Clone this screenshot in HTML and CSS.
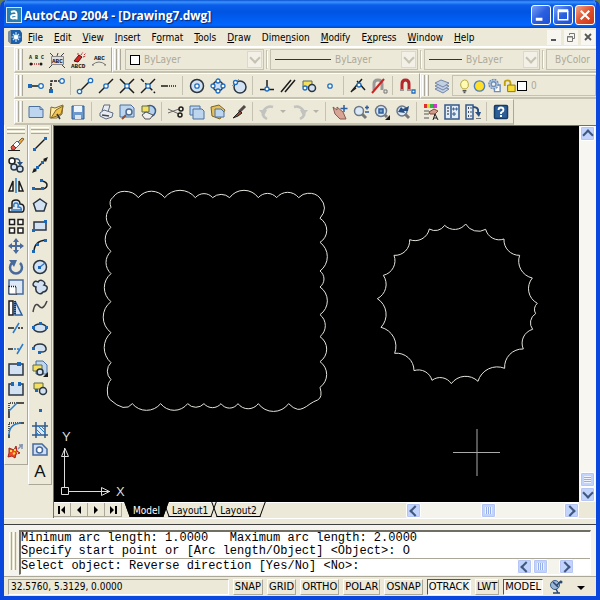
FILE: index.html
```
<!DOCTYPE html>
<html lang="en">
<head>
    <meta charset="UTF-8">
    <meta name="viewport" content="width=device-width, initial-scale=1.0">
    <title>AutoCAD 2004 - [Drawing7.dwg]</title>
    <link rel="stylesheet" href="styles.css">
</head>
<body>
<div class="window">

    <!-- Title bar -->
    <header class="titlebar">
        <svg class="app-icon" viewBox="0 0 16 16"><rect x=".5" y=".5" width="15" height="15" fill="#2b7fae" stroke="#d5e6f2"/><path d="M5 5Q10.500 3 10.500 7V12.500M10.500 8Q5 7.500 5 10T10.500 10.500" fill="none" stroke="#fff" stroke-width="2"/></svg>
        <h1>AutoCAD 2004 - [Drawing7.dwg]</h1>
        <button class="caption" aria-label="Minimize"><svg viewBox="0 0 19 19"><path d="M4 14h7" stroke="#fff" stroke-width="3"/></svg></button>
        <button class="caption" aria-label="Maximize"><svg viewBox="0 0 19 19"><path d="M4.500 5v9.500h10V5" stroke="#fff" stroke-width="1.500" fill="none"/><path d="M4 5h11" stroke="#fff" stroke-width="3"/></svg></button>
        <button class="caption close" aria-label="Close"><svg viewBox="0 0 19 19"><path d="M5 5l9 9M14 5l-9 9" stroke="#fff" stroke-width="2.200"/></svg></button>
    </header>

    <!-- Menu bar -->
    <nav class="menubar">
        <svg class="doc-icon" viewBox="0 0 16 16"><path d="M1 3l3-2h9l2 3v8l-3 3H4l-3-3z" fill="#1d5fa8"/><path d="M1 3l3-2v14l-3-3z" fill="#7d8da0"/><path d="M9 3v10M4.500 8h9M6 5l6 6M12 5l-6 6" stroke="#bfe0ff" stroke-width="1.200"/><circle cx="9" cy="8" r="2" fill="#fff"/></svg>
        <button><u>F</u>ile</button>
        <button><u>E</u>dit</button>
        <button><u>V</u>iew</button>
        <button><u>I</u>nsert</button>
        <button>F<u>o</u>rmat</button>
        <button><u>T</u>ools</button>
        <button><u>D</u>raw</button>
        <button>Dime<u>n</u>sion</button>
        <button><u>M</u>odify</button>
        <button>E<u>x</u>press</button>
        <button><u>W</u>indow</button>
        <button><u>H</u>elp</button>
        <span class="mdi">
            <button aria-label="Minimize drawing"><svg viewBox="0 0 14 14"><path d="M4 10h5" stroke="#555" stroke-width="2"/></svg></button>
            <button aria-label="Restore drawing"><svg viewBox="0 0 14 14"><path d="M3.500 6.500h5v5h-5zM3 7h6M5.500 5V3.500h5v5H9" stroke="#777" fill="none"/></svg></button>
            <button aria-label="Close drawing"><svg viewBox="0 0 14 14"><path d="M4 4l6 6M10 4l-6 6" stroke="#555" stroke-width="1.800"/></svg></button>
        </span>
    </nav>

    <!-- Toolbars -->
    <div class="toolbars">
        <div class="row">
            <div class="toolbar">
                <span class="grip"></span>
                <button class="tool" aria-label="Text fit"><svg class="icon" viewBox="0 0 18 18"><text class="tiny" x="2" y="8">A B C</text><path d="M5 13h9" stroke-dasharray="1 1" stroke="#a33"/><circle class="ink" cx="4" cy="13" r="1.500"/><circle class="ink" cx="14" cy="13" r="1.500"/></svg></button>
                <button class="tool" aria-label="Text mask"><svg class="icon" viewBox="0 0 18 18"><path d="M3.500 5.500h12v8h-12z" stroke="#888" stroke-width="1" fill="#ddd"/><path d="M2 2l3 3M16 2l-3 3M1 17l3-3M17 17l-3-3M9 5l1-3" stroke="#444" stroke-width="1"/><text x="4" y="12">ABC</text></svg></button>
                <button class="tool" aria-label="Explode text"><svg class="icon" viewBox="0 0 18 18"><path d="M5 10l5-6 3 2-4 5z" fill="#d22" stroke="#511" stroke-width="1"/><path d="M12 4l2-3M14 6l3-1M15 4l2-2M9 4V1" stroke="#b33" stroke-width="1" stroke-dasharray="2 1"/><text x="2" y="17">ABCD</text></svg></button>
                <button class="tool" aria-label="Arc aligned text"><svg class="icon" viewBox="0 0 18 18"><text x="4" y="9">ABC</text><path d="M2 14Q9 8 16 14M2 14h2M16 14h-2" stroke="#777" stroke-width="1"/></svg></button>
            </div>
            <div class="toolbar grow">
                <span class="grip"></span>
                <label class="combo color"><span class="swatch"></span><select aria-label="Color"><option>ByLayer</option></select><span class="drop"></span></label>
                <span class="thin"></span>
                <label class="combo linetype"><span class="rule"></span><select aria-label="Linetype"><option>ByLayer</option></select><span class="drop"></span></label>
                <span class="thin"></span>
                <label class="combo weight"><span class="rule"></span><select aria-label="Lineweight"><option>ByLayer</option></select><span class="drop"></span></label>
                <span class="thin"></span>
                <label class="combo plot"><select aria-label="Plot style"><option>ByColor</option></select></label>
            </div>
        </div>

        <div class="row">
            <div class="toolbar">
                <span class="grip"></span>
                <button class="tool" aria-label="Temporary track point"><svg class="icon" viewBox="0 0 18 18"><path d="M3 9h9"/><path class="dot" d="M1 7h4v4H1z"/><circle class="node" cx="14" cy="9" r="2.300"/></svg></button>
                <button class="tool" aria-label="Snap from"><svg class="icon" viewBox="0 0 18 18"><path d="M3 13V4h10" stroke-dasharray="3 1"/><path class="dot" d="M1 12h4v4H1z"/><circle class="node" cx="14" cy="4" r="2.300"/></svg></button>
                <span class="sep"></span>
                <button class="tool" aria-label="Endpoint"><svg class="icon" viewBox="0 0 18 18"><path d="M3 15L15 3"/><circle class="node" cx="3.500" cy="14.500" r="2.200"/><circle class="node" cx="14.500" cy="3.500" r="2.200"/></svg></button>
                <button class="tool" aria-label="Midpoint"><svg class="icon" viewBox="0 0 18 18"><path d="M2 16L16 2"/><circle class="node" cx="9" cy="9" r="2.200"/></svg></button>
                <button class="tool" aria-label="Intersection"><svg class="icon" viewBox="0 0 18 18"><path d="M2 16L16 2M2 2l14 14"/><circle class="node" cx="9" cy="9" r="2.200"/></svg></button>
                <button class="tool" aria-label="Apparent intersection"><svg class="icon" viewBox="0 0 18 18"><path d="M2 16L16 2"/><path d="M2 2l14 14" stroke-dasharray="4 2"/><circle class="node" cx="9" cy="9" r="2.200"/></svg></button>
                <button class="tool" aria-label="Extension"><svg class="icon" viewBox="0 0 18 18"><path d="M1 9h7"/><path d="M9 9h8" stroke-dasharray="1 1"/></svg></button>
                <span class="sep"></span>
                <button class="tool" aria-label="Center"><svg class="icon" viewBox="0 0 18 18"><circle class="pale" cx="9" cy="9" r="6.500"/><circle class="node" cx="9" cy="9" r="2.200"/></svg></button>
                <button class="tool" aria-label="Quadrant"><svg class="icon" viewBox="0 0 18 18"><circle class="pale" cx="9" cy="9" r="5"/><circle class="node" cx="9" cy="4" r="2"/><circle class="node" cx="9" cy="14" r="2"/><circle class="node" cx="4" cy="9" r="2"/><circle class="node" cx="14" cy="9" r="2"/></svg></button>
                <button class="tool" aria-label="Tangent"><svg class="icon" viewBox="0 0 18 18"><circle class="pale" cx="10" cy="10" r="6"/><path d="M2 9L9 2" stroke="#999" stroke-width="1"/><circle class="node" cx="5.500" cy="5.500" r="2"/></svg></button>
                <span class="sep"></span>
                <button class="tool" aria-label="Perpendicular"><svg class="icon" viewBox="0 0 18 18"><path d="M9 3v9M2 12.500h14"/><circle class="node" cx="9" cy="12" r="2"/></svg></button>
                <button class="tool" aria-label="Parallel"><svg class="icon" viewBox="0 0 18 18"><path d="M2 15L12 3M6 15L16 3"/></svg></button>
                <button class="tool" aria-label="Insert"><svg class="icon" viewBox="0 0 18 18"><path class="gold" d="M3 4h9v6H3z"/><circle class="pale" cx="12" cy="11" r="3.500"/><circle class="node" cx="5" cy="11" r="2"/></svg></button>
                <button class="tool" aria-label="Node"><svg class="icon" viewBox="0 0 18 18"><circle class="node" cx="9" cy="9" r="2.200"/></svg></button>
                <span class="sep"></span>
                <button class="tool" aria-label="Nearest"><svg class="icon" viewBox="0 0 18 18"><path d="M2 15Q7 9 13 2M8 4l8 9M3 14l4-3"/><circle class="node" cx="10" cy="8" r="2"/></svg></button>
                <button class="tool" aria-label="Snap to none"><svg class="icon" viewBox="0 0 18 18"><path d="M4 13V7Q4 3 8 3T12 7V13" stroke="#999" stroke-width="3"/><path d="M2 16L14 2" stroke="#c22" stroke-width="2"/><path d="M14 13h3v3h-3z" stroke="#777" stroke-width="1"/></svg></button>
                <span class="sep"></span>
                <button class="tool" aria-label="Snap settings"><svg class="icon" viewBox="0 0 18 18"><path d="M4 13V7Q4 3 7.500 3T11 7V13" stroke="#b3262c" stroke-width="3"/><path d="M2 13h4M9 13h4" stroke="#999" stroke-width="2"/><path class="node" d="M14 13h3v3h-3z"/></svg></button>
            </div>
            <div class="toolbar grow">
                <span class="grip"></span>
                <button class="tool" aria-label="Layer properties"><svg class="icon" viewBox="0 0 18 18"><g fill="#c3cfe2" stroke="#7187a8" stroke-width="1"><path d="M2 12l6-3 8 3-6 4z"/><path d="M2 9l6-3 8 3-6 4z"/><path d="M2 6l6-3 8 3-6 4z"/></g></svg></button>
                <label class="combo layer">
                    <svg class="icon small" viewBox="0 0 16 18"><path d="M6 12Q3 9 4 6t4-3.500T12 6t-2 6z" fill="#fffbb0" stroke="#b2a33b" stroke-width="1"/><path d="M6 14h4M7 16h2" stroke="#555"/></svg>
                    <svg class="icon small" viewBox="0 0 16 18"><circle cx="8" cy="9" r="5.500" fill="#ffdf28" stroke="#4f7fbd"/></svg>
                    <svg class="icon small" viewBox="0 0 16 18"><path d="M8 8h6v7H8z" fill="#fff" stroke="#6f8fba"/><circle cx="7" cy="7" r="5" fill="#b9cbe2" stroke="#6f8fba" stroke-dasharray="2 1"/><circle cx="7" cy="7" r="2.500" fill="#eee" stroke="#6f8fba"/></svg>
                    <svg class="icon small" viewBox="0 0 16 18"><path d="M3 9V5Q3 3 6 3t3 3v3" stroke="#c0a10c" stroke-width="2"/><path d="M6 8h8v7H6z" fill="#f8dd3a" stroke="#8a7400" stroke-width="1"/></svg>
                    <span class="swatch"></span><select aria-label="Layer"><option>0</option></select>
                </label>
            </div>
        </div>

        <div class="row">
            <div class="toolbar">
                <span class="grip"></span>
                <button class="tool" aria-label="New"><svg class="icon" viewBox="0 0 18 18"><path class="sheet" d="M2 3.500h11l3 3v8H2z"/><path d="M13 3.500v3h3" stroke="#557aa8" stroke-width="1"/></svg></button>
                <button class="tool" aria-label="Open"><svg class="icon" viewBox="0 0 18 18"><path d="M2 15L3 4l4 1 8-3-1 9-5 4z" fill="#ffe9a0" stroke="#80692a" stroke-width="1"/><path d="M3 15l5-8 7-4-2 8-4 2z" fill="#f1c24d" stroke="#80692a" stroke-width="1"/><path d="M9 11l3 5" stroke="#333"/></svg></button>
                <button class="tool" aria-label="Save"><svg class="icon" viewBox="0 0 18 18"><path d="M3 3h12v13H3z" fill="#6c98cc" stroke="#2f5b94" stroke-width="1"/><path d="M5 3h8v6H5z" fill="#eef4fb" stroke="none"/><path d="M6 12h6v4H6z" fill="#dde6f0" stroke="none"/></svg></button>
                <span class="sep"></span>
                <button class="tool" aria-label="Plot"><svg class="icon" viewBox="0 0 18 18"><g fill="#e8ecf2" stroke="#5d6b80" stroke-width="1"><path d="M5 8l2-6h6l-2 7z"/><path d="M3 10l4-3 9 3-1 4-6 2-6-3z"/></g><path d="M5 12l7 1" stroke="#445"/></svg></button>
                <button class="tool" aria-label="Plot preview"><svg class="icon" viewBox="0 0 18 18"><path class="sheet" d="M2 2h11l3 3v9H2z"/><circle cx="11" cy="9" r="3" fill="#eef5fc" stroke="#4e6a90"/><path d="M8 12l-4 4" stroke="#93502a" stroke-width="2"/></svg></button>
                <button class="tool" aria-label="Publish"><svg class="icon" viewBox="0 0 18 18"><circle cx="11" cy="8" r="5.500" fill="#b6d2ee" stroke="#395c8a"/><path class="gold" d="M3 3h7v6H3z"/><path d="M3 12l4-3 7 3-3 4H6z" fill="#eee" stroke="#555" stroke-width="1"/></svg></button>
                <span class="sep"></span>
                <button class="tool" aria-label="Cut"><svg class="icon" viewBox="0 0 18 18"><path d="M1 6l11 5M1 10l11-4" stroke="#666" stroke-width="1"/><circle cx="14" cy="6" r="2"/><circle cx="13" cy="12" r="2"/></svg></button>
                <button class="tool" aria-label="Copy"><svg class="icon" viewBox="0 0 18 18"><path class="sheet" d="M2 3h10v9H2z"/><path class="sheet" d="M5 6h9l2 2v8H5z"/></svg></button>
                <button class="tool" aria-label="Paste"><svg class="icon" viewBox="0 0 18 18"><path d="M2 4l8-2 6 5-5 9-8-3z" fill="#e5c05a" stroke="#7c6420" stroke-width="1"/><path class="sheet" d="M6 6h6l3 3v5H6z"/></svg></button>
                <button class="tool" aria-label="Match properties"><svg class="icon" viewBox="0 0 18 18"><path d="M15 3l-6 6" stroke="#53484a" stroke-width="3"/><path d="M10 8l-7 7 5-2 4-3z" fill="#934a35" stroke="#222" stroke-width="1"/></svg></button>
                <span class="sep"></span>
                <button class="tool" aria-label="Undo"><svg class="icon" viewBox="0 0 18 18"><path d="M9 16Q2 12 6 7t9-3" stroke="#c2c2be" stroke-width="2.500"/><path d="M1 7h8l-3 6z" fill="#c2c2be" stroke="none"/></svg></button>
                <button class="tool caret" aria-label="Undo list"></button>
                <button class="tool" aria-label="Redo"><svg class="icon" viewBox="0 0 18 18"><path d="M9 16Q16 12 12 7T3 4" stroke="#c2c2be" stroke-width="2.500"/><path d="M17 7H9l3 6z" fill="#c2c2be" stroke="none"/></svg></button>
                <button class="tool caret" aria-label="Redo list"></button>
                <span class="sep"></span>
                <button class="tool" aria-label="Pan"><svg class="icon" viewBox="0 0 18 18"><path d="M2 4l4 3 0-3 6 5 3 7-6 0-5-5z" fill="#d8a595" stroke="#895b52" stroke-width="1"/><path d="M13 2v7M9.500 5.500h7" stroke="#2c5d9c"/></svg></button>
                <button class="tool" aria-label="Zoom realtime"><svg class="icon" viewBox="0 0 18 18"><circle class="lens" cx="7" cy="8" r="4.500"/><path d="M10 11l4 4" stroke="#777" stroke-width="3"/><path d="M13 4.500h4M15 2.500v4M13 9h4" stroke="#2c5d9c"/></svg></button>
                <button class="tool" aria-label="Zoom window"><svg class="icon" viewBox="0 0 18 18"><circle class="lens" cx="8" cy="8" r="5.500"/><path d="M6 6h4v4H6z" fill="#7f9cc0" stroke="#2c5d9c"/><path d="M12 12l2 2" stroke="#777" stroke-width="3"/><path class="ink" d="M17 12v5h-5z"/></svg></button>
                <button class="tool" aria-label="Zoom previous"><svg class="icon" viewBox="0 0 18 18"><circle class="lens" cx="8" cy="8" r="5"/><path d="M11 11l4 4" stroke="#777" stroke-width="3"/><path d="M4 9l3-5 2 2 6-3-1 5-4 0 1 2z" fill="#284f82" stroke="none"/></svg></button>
                <span class="sep"></span>
                <button class="tool" aria-label="Properties"><svg class="icon" viewBox="0 0 18 18"><path d="M2 3h3" stroke="#e12d2d" stroke-width="4"/><path d="M5 3h3" stroke="#e6d32f" stroke-width="4"/><path d="M8 3h3" stroke="#37b24b" stroke-width="4"/><path d="M11 3h4" stroke="#d236c9" stroke-width="4"/><path d="M2 8h5M2 11h5M2 15h5" stroke="#555" stroke-width="1"/><path d="M7 9l5-3 4 2-3 3H8z" fill="#d59b88" stroke="#7c4b40" stroke-width="1"/><path d="M11 17l2-6 3 6M12 15h3" stroke-width="1"/></svg></button>
                <button class="tool" aria-label="DesignCenter"><svg class="icon" viewBox="0 0 18 18"><path class="panel" d="M2 2h14v14H2z"/><path d="M8 3v12" stroke="#33598b"/><path d="M4 5h2M4 8h2M4 11h2" stroke-width="1"/><path d="M10 5h1v2h-1zM13 5h1v2h-1zM10 10h2v2h-2z" stroke="#33598b" stroke-width="1"/></svg></button>
                <button class="tool" aria-label="Tool palettes"><svg class="icon" viewBox="0 0 18 18"><path class="panel" d="M2 2h7v14H2z"/><path d="M4 5h1M6.500 5h1M4 9h1M6.500 9h1M4 13h1M6.500 13h1" stroke-width="1.500"/><path d="M9 4q6 0 5 5" stroke="#284f82" stroke-width="2"/><path d="M11 9h6l-2 5z" fill="#284f82" stroke="none"/><path d="M12 15.500h5" stroke="#777" stroke-width="1"/></svg></button>
                <span class="sep"></span>
                <button class="tool" aria-label="Help"><svg class="icon" viewBox="0 0 18 18"><rect x="2.500" y="2.500" width="13" height="13" rx="1" fill="#2c5f98" stroke="#183b66"/><path d="M6.500 7Q6.500 4.500 9 4.500T11.500 7Q11.500 8.500 9 9.500V11" stroke="#fff" stroke-width="1.800"/><path d="M9 12v2" stroke="#fff" stroke-width="2"/></svg></button>
            </div>
        </div>
    </div>

    <main class="workspace">
        <!-- Modify toolbar -->
        <div class="side modify">
            <span class="grip-h"></span>
            <div class="tools">
                <button class="tool" aria-label="Erase"><svg class="icon" viewBox="0 0 18 18"><path d="M10 8l5-5 2 1-5 6z" fill="#f0a73c" stroke="#7a5a2a" stroke-width="1"/><path d="M6 10l4-4 3 3-4 4z" fill="#fff" stroke="#4a6a98" stroke-width="1"/><path d="M4 12l2-2 3 3-2 2H5z" fill="#e2564a" stroke="#8a2f28" stroke-width="1"/><path d="M1 15.500h12" stroke-width="1"/></svg></button>
                <button class="tool" aria-label="Copy object"><svg class="icon" viewBox="0 0 18 18"><circle cx="5" cy="5" r="3" fill="#fff"/><circle class="pale" cx="7" cy="11" r="3"/><circle class="pale" cx="13" cy="13" r="3"/><path d="M8 3q5-1 5 4" stroke="#284f82"/><path d="M10 6h6l-3 4z" fill="#284f82" stroke="none"/></svg></button>
                <button class="tool" aria-label="Mirror"><svg class="icon" viewBox="0 0 18 18"><path d="M6 5v10H2zM12 5v10h4z" fill="#fff"/><path d="M9 2v15" stroke="#2a7bc8"/></svg></button>
                <button class="tool" aria-label="Offset"><svg class="icon" viewBox="0 0 18 18"><path d="M2 15v-4h3V6q0-3 4-3t4 4q4 0 4 4t-2 4z" fill="#dce8f5"/><path d="M4 13h11M7 10q-1-4 2-4t2 4q4 0 3 3" stroke="#2a7bc8"/></svg></button>
                <button class="tool" aria-label="Array"><svg class="icon" viewBox="0 0 18 18"><path d="M2.500 2.500h5v5h-5zM11 2.500h5v5h-5zM2.500 11h5v5h-5zM11 11h5v5h-5z" fill="#fff"/></svg></button>
                <button class="tool" aria-label="Move"><svg class="icon" viewBox="0 0 18 18"><path d="M9 3v12M3 9h12" stroke="#47699c" stroke-width="2"/><path d="M9 1l3 4H6zM9 17l3-4H6zM1 9l4-3v6zM17 9l-4-3v6z" fill="#47699c" stroke="none"/></svg></button>
                <button class="tool" aria-label="Rotate"><svg class="icon" viewBox="0 0 18 18"><path d="M5 5a6 6 0 1 0 8 0" stroke="#47699c" stroke-width="2.500"/><path d="M2 2h8l-3 7z" fill="#47699c" stroke="none"/></svg></button>
                <button class="tool" aria-label="Scale"><svg class="icon" viewBox="0 0 18 18"><path d="M2 2h14v14H2z" fill="#dce8f5" stroke="#47699c"/><path d="M2 8.500h7V16H2z" fill="#fff" stroke-dasharray="1 1"/></svg></button>
                <button class="tool" aria-label="Stretch"><svg class="icon" viewBox="0 0 18 18"><path d="M2 2h4v14H2z" fill="#fff"/><path d="M8 2l7 14H8z" fill="#dce8f5" stroke="#2c5d9c"/><path d="M8 2v14" stroke-dasharray="1 1"/></svg></button>
                <button class="tool" aria-label="Trim"><svg class="icon" viewBox="0 0 18 18"><path d="M1 9h6"/><path d="M11 9h6" stroke-dasharray="2 1"/><path d="M6 14l6-10" stroke="#2a7bc8"/></svg></button>
                <button class="tool" aria-label="Extend"><svg class="icon" viewBox="0 0 18 18"><path d="M1 9h5"/><path d="M7 9h5" stroke="#2a7bc8" stroke-dasharray="2 1"/><path d="M10 14l6-10" stroke="#2a7bc8"/></svg></button>
                <button class="tool" aria-label="Break at point"><svg class="icon" viewBox="0 0 18 18"><path class="pale" d="M2 4h14v11H2z"/><path class="dot" d="M10 2h4v4h-4z"/></svg></button>
                <button class="tool" aria-label="Break"><svg class="icon" viewBox="0 0 18 18"><path class="pale" d="M5 4H2v11h14V4h-3"/><path class="dot" d="M4 2h3v4H4zM11 2h3v4h-3z"/></svg></button>
                <button class="tool" aria-label="Chamfer"><svg class="icon" viewBox="0 0 18 18"><path d="M2 17V9M9 2h8"/><path d="M2 9V2h7" stroke-dasharray="1 1"/><path d="M2 10l8-8" stroke="#2a7bc8"/></svg></button>
                <button class="tool" aria-label="Fillet"><svg class="icon" viewBox="0 0 18 18"><path d="M2 17v-4M12 2h5"/><path d="M2 10V2h9" stroke-dasharray="1 1"/><path d="M2 14Q2 3 14 2" stroke="#2a7bc8"/></svg></button>
                <button class="tool" aria-label="Explode"><svg class="icon" viewBox="0 0 18 18"><path d="M2 6l5 2 2-4 1 5 3 2-4 1-1 4-3-2-4 1 1-4z" fill="#ee4b28" stroke="#a3241c" stroke-width="1"/><path d="M3 9h2M8 7v2M6 12l2-1M10 11h1" stroke="#ffd944" stroke-width="2"/><path d="M11 7l4-4M12 3h4M15 2v5" stroke="#8593ad"/></svg></button>
            </div>
        </div>

        <!-- Draw toolbar -->
        <div class="side draw">
            <span class="grip-h"></span>
            <div class="tools">
                <button class="tool" aria-label="Line"><svg class="icon" viewBox="0 0 18 18"><path d="M4 14L14 4"/><path class="dot" d="M2 13h3v3H2zM13 2h3v3h-3z"/></svg></button>
                <button class="tool" aria-label="Construction line"><svg class="icon" viewBox="0 0 18 18"><path d="M3 15L15 3"/><path class="ink" d="M1 17l2-5 3 3zM17 1l-5 2 3 3z"/><path class="dot" d="M5 10h3v3H5zM10 5h3v3h-3z"/></svg></button>
                <button class="tool" aria-label="Polyline"><svg class="icon" viewBox="0 0 18 18"><path d="M3 13h9q4-1 4-4t-5-4"/><path class="dot" d="M1 11h3v3H1zM10 11h3v3h-3zM9 3h3v3H9z"/></svg></button>
                <button class="tool" aria-label="Polygon"><svg class="icon" viewBox="0 0 18 18"><path class="pale" d="M9 3l6.500 4.500L13 15H5L2.500 7.500z"/></svg></button>
                <button class="tool" aria-label="Rectangle"><svg class="icon" viewBox="0 0 18 18"><path class="pale" d="M3 5h12v8H3z"/><path class="dot" d="M1 12h3v3H1zM13 3h3v3h-3z"/></svg></button>
                <button class="tool" aria-label="Arc"><svg class="icon" viewBox="0 0 18 18"><path d="M3 15Q3 4 15 3"/><path class="dot" d="M1 13h3v3H1zM5 6h3v3H5zM13 2h3v3h-3z"/></svg></button>
                <button class="tool" aria-label="Circle"><svg class="icon" viewBox="0 0 18 18"><circle class="pale" cx="9" cy="9" r="6.500"/><path d="M9 9l5-4" stroke="#2a7bc8"/><path class="dot" d="M7 8h3v3H7z"/></svg></button>
                <button class="tool" aria-label="Revision cloud"><svg class="icon" viewBox="0 0 18 18"><path class="pale" d="M5 9Q1 8 2.500 5T7 4q2-3 5-1t1 4q4 1 3 4t-4 3q-2 3-5 1t-2-6z"/></svg></button>
                <button class="tool" aria-label="Spline"><svg class="icon" viewBox="0 0 18 18"><path d="M2 14Q4 3 8 8t8-5" stroke="#444"/></svg></button>
                <button class="tool" aria-label="Ellipse"><svg class="icon" viewBox="0 0 18 18"><ellipse class="pale" cx="9" cy="9" rx="6.500" ry="4"/><path class="dot" d="M1 7h3v3H1zM14 7h3v3h-3zM8 3h3v3H8z"/></svg></button>
                <button class="tool" aria-label="Ellipse arc"><svg class="icon" viewBox="0 0 18 18"><path class="pale" d="M3 8Q4 5 9 5t6 4-5 4"/><path class="dot" d="M1 8h3v3H1zM7 12h3v3H7z"/></svg></button>
                <button class="tool" aria-label="Insert block"><svg class="icon" viewBox="0 0 18 18"><path class="sheet" d="M5 1h7l4 4v9H5z"/><path class="gold" d="M2 5h9v6H2z"/><circle class="pale" cx="9" cy="12" r="3"/><path class="ink" d="M17 12v5h-5z"/></svg></button>
                <button class="tool" aria-label="Make block"><svg class="icon" viewBox="0 0 18 18"><path class="gold" d="M3 3h9v6H3z"/><circle class="pale" cx="12" cy="11" r="3.500"/><path class="dot" d="M4 9h3v3H4z"/></svg></button>
                <button class="tool" aria-label="Point"><svg class="icon" viewBox="0 0 18 18"><path class="dot" d="M8 8h3v3H8z"/></svg></button>
                <button class="tool" aria-label="Hatch"><svg class="icon" viewBox="0 0 18 18"><path d="M5 5h9v9H5z" fill="#dce8f5" stroke="none"/><path d="M5 1v16M14 1v16M1 5h16M1 14h16" stroke="#33598b"/><path d="M5 8l6 6M5 11l3 3M7 5l7 7M10 5l4 4" stroke="#2a7bc8" stroke-width="1"/></svg></button>
                <button class="tool" aria-label="Region"><svg class="icon" viewBox="0 0 18 18"><path d="M2 3h9l5 5v6H2z" fill="#cfe0f4" stroke="#47699c"/><circle cx="8.500" cy="9" r="3" fill="#fff" stroke="#47699c"/></svg></button>
                <button class="tool" aria-label="Multiline text"><svg class="icon" viewBox="0 0 18 18"><text class="mtext" x="9" y="15">A</text></svg></button>
            </div>
        </div>

        <!-- Drawing area -->
        <div class="viewport">
            <svg class="canvas">
                <g class="cloud" transform="translate(41 54) scale(.3333)">
                    <path d="M48 82Q40 62 54 52Q66 34 88 34Q116 34 130 53A50 50 0 0 1 209 53A59 59 0 0 1 301 53A34 34 0 0 1 353 53A38 38 0 0 1 404 53A53 53 0 0 1 490 53A36 36 0 0 1 545 53A42 42 0 0 1 611 53Q624 40 638 40Q662 38 675 54Q702 84 675 115
                             A42 42 0 0 1 675 187A53 53 0 0 1 675 273A30 30 0 0 1 675 321A50 50 0 0 1 675 404A42 42 0 0 1 675 470A45 45 0 0 1 675 545A47 47 0 0 1 675 622
                             Q684 652 668 660Q655 665 645 672Q622 690 608 688Q595 686 581 671
                             A56 56 0 0 1 490 671A38 38 0 0 1 429 671A31 31 0 0 1 378 671A33 33 0 0 1 327 671A33 33 0 0 1 278 671A51 51 0 0 1 197 671A55 55 0 0 1 112 671
                             Q90 700 44 658Q36 650 37 630Q38 608 48 599
                             A35 35 0 0 1 48 548A60 60 0 0 1 48 458A58 58 0 0 1 48 365A54 54 0 0 1 48 281A45 45 0 0 1 48 214A46 46 0 0 1 48 142A39 39 0 0 1 48 82z"/>
                </g>
                <g class="cloud" transform="translate(316 89) scale(.3333)">
                    <path d="M287 27A44 44 0 0 0 347 43A42 42 0 0 0 402 72A46 46 0 0 0 449 121A52 52 0 0 0 487 189A50 50 0 0 0 502 265A24 24 0 0 0 497 296A32 32 0 0 0 488 343A43 43 0 0 0 460 402A54 54 0 0 0 404 460A60 60 0 0 0 324 499
                             A53 53 0 0 0 244 506A40 40 0 0 0 186 496A42 42 0 0 0 132 467A52 52 0 0 0 74 415A59 59 0 0 0 33 337A56 56 0 0 0 22 251A48 48 0 0 0 40 181A45 45 0 0 0 72 121A44 44 0 0 0 119 74A44 44 0 0 0 178 42A34 34 0 0 0 224 31A42 42 0 0 0 287 27z"/>
                </g>
                <path class="cursor" d="M399 326.500h47M423 303v47"/>
                <g class="ucs">
                    <path d="M7.500 361.500h7v7h-7zM10.500 361V322M15 365.500h41M7.500 330.500h7l-3.500-8zM47.500 361.500v8l8-4z"/>
                    <text x="8" y="315">Y</text>
                    <text x="62" y="370">X</text>
                </g>
            </svg>
            <div class="vscroll">
                <button class="arrow up" aria-label="Scroll up"></button>
                <span class="thumb"></span>
                <button class="arrow down" aria-label="Scroll down"></button>
            </div>
            <div class="tabbar">
                <button class="nav" aria-label="First tab"><svg viewBox="0 0 10 10"><path d="M1 1h2v8H1zM8 1v8L4 5z"/></svg></button>
                <button class="nav" aria-label="Previous tab"><svg viewBox="0 0 10 10"><path d="M7 1v8L3 5z"/></svg></button>
                <button class="nav" aria-label="Next tab"><svg viewBox="0 0 10 10"><path d="M3 1v8l4-4z"/></svg></button>
                <button class="nav" aria-label="Last tab"><svg viewBox="0 0 10 10"><path d="M7 1h2v8H7zM2 1v8l4-4z"/></svg></button>
                <button class="tab active">Model</button>
                <button class="tab">Layout1</button>
                <button class="tab">Layout2</button>
                <div class="hscroll">
                    <button class="arrow left" aria-label="Scroll left"></button>
                    <span class="thumb"></span>
                    <button class="arrow right" aria-label="Scroll right"></button>
                </div>
            </div>
        </div>
    </main>

    <!-- Command line -->
    <section class="command">
        <span class="grip"></span>
        <div class="console">
            <pre>Minimum arc length: 1.0000   Maximum arc length: 2.0000
Specify start point or [Arc length/Object] &lt;Object&gt;: O</pre>
            <div class="prompt">
                <input type="text" aria-label="Command" value="Select object: Reverse direction [Yes/No] &lt;No&gt;:">
                <div class="hscroll">
                    <button class="arrow left" aria-label="Scroll command left"></button>
                    <span class="thumb"></span>
                    <button class="arrow right" aria-label="Scroll command right"></button>
                </div>
            </div>
        </div>
    </section>

    <!-- Status bar -->
    <footer class="status">
        <span class="coords">32.5760, 5.3129, 0.0000</span>
        <button>SNAP</button>
        <button>GRID</button>
        <button>ORTHO</button>
        <button>POLAR</button>
        <button>OSNAP</button>
        <button class="on">OTRACK</button>
        <button>LWT</button>
        <button class="on">MODEL</button>
        <svg class="comm" viewBox="0 0 16 16"><circle cx="7" cy="6" r="4.500" fill="#9db8d6" stroke="#3c5c88"/><path d="M5 3l5 5M9 6l4-4M5 14h7M8 10l2 4" stroke="#29476f" stroke-width="1.500"/><circle cx="13" cy="3" r="1.500" fill="#29476f"/></svg>
        <button class="menu" aria-label="Status bar menu"></button>
    </footer>
</div>
</body>
</html>
```
FILE: styles.css
```
* { box-sizing: border-box; }
body {
    margin: 0;
    background: #5d7b55;
    font-family: "DejaVu Sans Condensed", "Liberation Sans", sans-serif;
    font-size: 10px;
    color: #000;
}
button, select, input { font: inherit; color: inherit; }
button { margin: 0; padding: 0; border: 0; background: none; }

.window {
    display: flex;
    flex-direction: column;
    height: 100vh;
    overflow: hidden;
    border: 4px solid #0a48dd;
    border-top: 0;
    border-radius: 7px 7px 0 0;
    background: #ece9d8;
}

/* Title bar */
.titlebar {
    display: flex;
    flex: none;
    align-items: center;
    gap: 2px;
    height: 28px;
    margin: 0 -4px;
    padding: 2px 5px 0 6px;
    background: linear-gradient(#0a52d0 0, #3b93ff 2px, #0a5ee8 5px, #0054e3 12px, #0062f8 22px, #0066ff 25px, #0046c8 28px);
}
.titlebar h1 {
    flex: 1;
    margin: 0;
    font: bold 12px "Open Sans", "Noto Sans", sans-serif;
    color: #fff;
    text-shadow: 1px 1px 1px #0a246a;
}
.app-icon { width: 16px; height: 16px; }
.caption {
    width: 20px;
    height: 20px;
    border: 1px solid #fff;
    border-radius: 3px;
    background: linear-gradient(135deg, #7aa0f5, #2a5fe0 50%, #1d4fd6);
}
.caption svg { display: block; width: 18px; height: 18px; }
.close { background: linear-gradient(135deg, #f0a58c, #e0502c 50%, #c8381a); }

/* Menu bar */
.menubar {
    display: flex;
    flex: none;
    align-items: center;
    gap: 11px;
    height: 18px;
    padding: 0 1px 0 3px;
}
.doc-icon { width: 16px; height: 16px; margin-right: -6px; }
.mdi { display: flex; gap: 3px; margin-left: auto; }
.mdi button { width: 14px; height: 15px; background: #f7f6f0; }
.mdi svg { display: block; width: 14px; height: 14px; }

/* Toolbars */
.toolbars { flex: none; border-top: 1px solid #fff; }
.row { display: flex; padding-left: 10px; }
.toolbar {
    display: flex;
    flex: none;
    align-items: center;
    height: 26px;
    padding-right: 2px;
    border: 1px solid #fff;
    border-right-color: #aca899;
    border-bottom: 2px solid #c5c2b2;
}
.toolbar.grow { flex: 1; min-width: 0; overflow: hidden; padding-right: 0; border-right: 0; }
.grip {
    flex: none;
    width: 8px;
    height: 21px;
    margin: 0 1px;
    background: repeating-linear-gradient(90deg, #fff 0 1px, #ece9d8 1px 2px, #aca899 2px 3px, #ece9d8 3px 4px);
}
.tool {
    display: flex;
    flex: none;
    align-items: center;
    justify-content: center;
    width: 21px;
    height: 20px;
}
.sep { flex: none; width: 1px; height: 19px; margin: 0 3px; background: #c5c2b2; }
.caret { width: 12px; }
.caret::after { content: ""; border: 3px solid transparent; border-top-color: #b5b3a8; border-bottom: 0; }

.icon {
    flex: none;
    width: 18px;
    height: 18px;
    fill: none;
    stroke: #1c1c1c;
    stroke-width: 1.5;
}
.icon text { font: bold 6px "Liberation Mono", monospace; fill: #111; stroke: none; }
.icon .tiny { font-size: 5px; }
.icon .mtext { font: 17px "Liberation Sans", sans-serif; text-anchor: middle; }
.icon.small { width: 15px; height: 18px; }
.node { fill: #fff; stroke: #1f6fbe; stroke-width: 1.3; }
.dot { fill: #1c68b8; stroke: none; }
.ink { fill: #1c1c1c; stroke: none; }
.pale { fill: #d3e2f3; stroke: #2b3542; }
.gold { fill: #f4df60; stroke: #5d6a4a; stroke-width: 1; }
.sheet { fill: #bdd5ef; stroke: #4a709f; stroke-width: 1; }
.lens { fill: #dbe8f5; stroke: #6a7789; }
.panel { fill: #e3edf8; stroke: #33598b; }

.combo {
    display: flex;
    flex: none;
    align-items: center;
    height: 21px;
    padding: 1px 1px 1px 4px;
    border: 1px solid #c5c2b2;
    color: #aca899;
}
.combo select {
    flex: 1;
    min-width: 0;
    padding: 0 0 0 4px;
    border: 0;
    background: none;
    appearance: none;
}
.color { width: 139px; margin-left: 2px; }
.linetype { width: 148px; }
.weight { width: 116px; }
.plot { width: 60px; }
.layer { flex: 1; }
.swatch { flex: none; width: 10px; height: 10px; border: 1px solid #000; background: #fff; }
.rule { flex: none; width: 56px; height: 1px; background: #333; }
.weight .rule { width: 33px; }
.drop {
    display: flex;
    align-items: center;
    justify-content: center;
    width: 15px;
    height: 17px;
    border: 1px solid #dcd9cb;
    background: #f3f1e7;
}
.drop::after {
    content: "";
    width: 6px;
    height: 6px;
    margin-top: -3px;
    border: solid #c5c2b2;
    border-width: 0 2px 2px 0;
    transform: rotate(45deg);
}
.thin { flex: none; width: 2px; height: 19px; margin: 0 2px; border: 1px solid #c5c2b2; border-right-color: #fff; }

/* Side toolbars */
.workspace {
    display: flex;
    flex: 1;
    min-height: 0;
    border-bottom: 1px solid #fff;
}
.side {
    align-self: flex-start;
    width: 24px;
    padding: 2px 0 3px;
    border-right: 1px solid #aca899;
    border-bottom: 1px solid #aca899;
    border-left: 1px solid #fff;
}
.grip-h {
    display: block;
    height: 7px;
    margin: 0 2px;
    background: repeating-linear-gradient(#fff 0 1px, #ece9d8 1px 2px, #aca899 2px 3px, #ece9d8 3px 4px);
}
.tools { display: grid; grid-auto-rows: 1fr; }
.modify .tools { height: 327px; }
.draw .tools { height: 347px; }
.side .tool { height: auto; }

/* Drawing area */
.viewport {
    display: grid;
    flex: 1;
    grid-template: 1fr 16px / 1fr 17px;
    min-width: 0;
    margin-left: 1px;
    border-top: 1px solid #716f64;
    border-left: 1px solid #716f64;
}
.canvas { width: 100%; height: 100%; background: #000; }
.cloud path { fill: none; stroke: #e4e4dc; stroke-width: 1; vector-effect: non-scaling-stroke; }
.cursor { stroke: #aaa; }
.ucs path { fill: none; stroke: #ddd; }
.ucs text { font: 13px "Liberation Sans", sans-serif; fill: #ddd; }

.vscroll {
    display: flex;
    flex-direction: column;
    align-items: center;
    background: #f7f6f1;
}
.hscroll { display: flex; background: #f4f3ec; }
.arrow, .thumb {
    display: flex;
    flex: none;
    align-items: center;
    justify-content: center;
    width: 15px;
    height: 15px;
    border: 1px solid #fff;
    border-radius: 2px;
    background: #c2d3fc;
    box-shadow: inset 0 0 0 1px #b5c6f5;
}
.arrow::after {
    content: "";
    width: 6px;
    height: 6px;
    border: solid #3f587e;
    border-width: 2px 2px 0 0;
}
.up::after { transform: rotate(-45deg); margin-top: 3px; }
.down::after { transform: rotate(135deg); margin-bottom: 3px; }
.left::after { transform: rotate(-135deg); margin-left: 3px; }
.right::after { transform: rotate(45deg); margin-right: 3px; }
.thumb::after {
    content: "";
    width: 7px;
    height: 7px;
    background: repeating-linear-gradient(90deg, #eef3ff 0 1px, #93aee8 1px 2px);
}
.vscroll .thumb { margin-top: auto; }
.vscroll .thumb::after { background: repeating-linear-gradient(#eef3ff 0 1px, #93aee8 1px 2px); }
.hscroll .thumb { margin: 0 auto 0 60px; }

.tabbar {
    display: flex;
    grid-column: 1 / 2;
    border-top: 1px solid #fff;
    height: 16px;
}
.nav {
    width: 17px;
    height: 14px;
    border-right: 1px solid #aca899;
    border-bottom: 1px solid #aca899;
}
.nav svg { display: block; width: 10px; height: 10px; margin: auto; }
.tab {
    position: relative;
    z-index: 0;
    height: 14px;
    padding: 0 6px;
}
/* two slanted halves make the trapezoid */
.tab::before, .tab::after {
    content: "";
    position: absolute;
    z-index: -1;
    top: -1px;
    bottom: 0;
    border-bottom: 1px solid #000;
}
.tab::before { left: 0; right: 40%; border-left: 1px solid #000; transform: skewX(20deg); }
.tab::after { left: 40%; right: 0; border-right: 1px solid #000; transform: skewX(-20deg); }
.tab.active { z-index: 1; margin-left: 5px; color: #fff; }
.tab.active::before, .tab.active::after { background: #000; }
.tabbar .hscroll { width: 173px; margin-left: auto; }

/* Command line */
.command {
    display: flex;
    flex: none;
    margin-top: 5px;
    padding: 5px 5px 1px 4px;
    border-top: 1px solid #404040;
    background: #f4f3ee;
}
.command .grip { height: 38px; margin: 2px 2px 0 1px; }
.console {
    flex: 1;
    min-width: 0;
    border: 1px solid #fff;
    border-top: 2px solid #716f64;
    border-left: 2px solid #716f64;
    background: #fff;
    font: 12px/13px "Liberation Mono", monospace;
}
.console pre { margin: 0; font: inherit; height: 27px; border-bottom: 1px solid #aca899; }
.prompt { display: flex; height: 15px; }
.prompt input { flex: 1; min-width: 0; padding: 0; border: 0; background: #fff; outline: 0; }
.prompt .hscroll { width: 57px; margin-right: 16px; }
.prompt .thumb { margin: 0 auto 0 1px; }

/* Status bar */
.status {
    display: flex;
    flex: none;
    align-items: center;
    gap: 4px;
    height: 20px;
    padding: 1px 4px 0;
    border-top: 1px solid #aca899;
}
.coords {
    flex: 1;
    height: 16px;
    padding: 1px 2px;
    border: 1px solid #aca899;
    border-right-color: #fff;
    border-bottom-color: #fff;
}
.status button {
    height: 16px;
    padding: 0 1px;
    border: 1px solid #fff;
    border-right-color: #aca899;
    border-bottom-color: #aca899;
    font-size: 11px;
    line-height: 14px;
}
.status .on {
    border-color: #555 #fff #fff #555;
    background: #f5f3ea;
}
.comm { width: 18px; height: 16px; fill: none; }
.status .menu { width: 23px; border: 0; }
.menu::after { content: ""; display: inline-block; border: 4px solid transparent; border-top-color: #000; border-bottom: 0; }
```
